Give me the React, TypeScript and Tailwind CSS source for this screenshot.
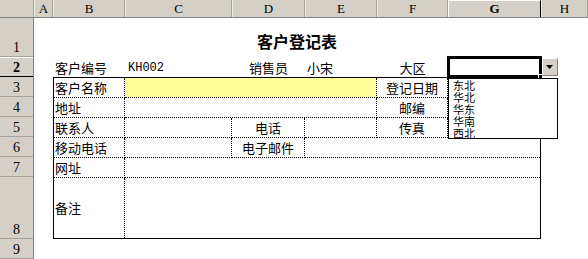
import React from "react";

const colHeads = [
  { l: "A", w: "w-[19px]" },
  { l: "B", w: "w-[72px]" },
  { l: "C", w: "w-[107px]" },
  { l: "D", w: "w-[73px]" },
  { l: "E", w: "w-[72px]" },
  { l: "F", w: "w-[71px]" },
  { l: "G", w: "w-[93px]", active: true },
  { l: "H", w: "flex-1" },
];

const rowHeads = [
  { n: "1", h: "h-[39px]" },
  { n: "2", h: "h-[20px]", active: true },
  { n: "3", h: "h-[20px]" },
  { n: "4", h: "h-[20px]" },
  { n: "5", h: "h-[20px]" },
  { n: "6", h: "h-[20px]" },
  { n: "7", h: "h-[20px]" },
  { n: "8", h: "h-[62px]" },
  { n: "9", h: "flex-1" },
];

const regions = ["东北", "华北", "华东", "华南", "西北"];

function Cell({
  children,
  className = "",
  middle = false,
}: {
  children?: React.ReactNode;
  className?: string;
  middle?: boolean;
}) {
  const align = middle ? "items-center" : "items-end pb-[1px]";
  return (
    <div className={`flex ${align} border-dotted border-black ${className}`}>
      {children}
    </div>
  );
}

export default function App() {
  return (
    <div className="w-[588px] h-[259px] overflow-hidden bg-white text-black font-['Noto_Sans_CJK_SC',sans-serif] text-[13px] leading-[16px] flex flex-col">
      {/* column headers */}
      <div className="flex h-[18px] bg-[#d4d0c8] border-b border-[#808080] font-['Liberation_Serif',serif] text-[13px]">
        <div className="w-[34px] border-r border-[#a5a29b]" />
        {colHeads.map((c) =>
          c.active ? (
            <div
              key={c.l}
              className={`${c.w} flex items-center justify-center border-t border-l border-t-white border-l-white border-r border-r-black font-bold`}
            >
              {c.l}
            </div>
          ) : (
            <div
              key={c.l}
              className={`${c.w} flex items-center justify-center border-r border-[#a5a29b] border-l border-l-[#efede8]`}
            >
              {c.l}
            </div>
          )
        )}
      </div>

      <div className="flex flex-1">
        {/* row headers */}
        <div className="w-[34px] flex flex-col bg-[#d4d0c8] border-r border-[#808080] font-['Liberation_Serif',serif] text-[14px] leading-[17px]">
          {rowHeads.map((r) =>
            r.active ? (
              <div
                key={r.n}
                className={`${r.h} flex items-end justify-center border-t border-t-white border-b border-b-black font-bold`}
              >
                {r.n}
              </div>
            ) : (
              <div
                key={r.n}
                className={`${r.h} flex items-end justify-center border-b border-[#a5a29b]`}
              >
                {r.n}
              </div>
            )
          )}
        </div>

        {/* sheet */}
        <div className="flex-1 grid grid-cols-[19px_72px_107px_73px_72px_71px_93px_1fr] grid-rows-[39px_20px_20px_20px_20px_20px_20px_62px_1fr]">
          <div className="col-start-2 col-span-6 row-start-1 flex items-center justify-center pt-[6px] font-bold text-[16px]">
            客户登记表
          </div>

          {/* row 2 */}
          <div className="col-start-2 row-start-2 flex items-end pl-[2px] pb-[1px]">客户编号</div>
          <div className="col-start-3 row-start-2 flex items-end pl-[3px] pb-[2px] font-['Liberation_Mono',monospace] text-[12px] leading-[14px]">
            KH002
          </div>
          <div className="col-start-4 row-start-2 flex items-end justify-center pb-[1px]">销售员</div>
          <div className="col-start-5 row-start-2 flex items-end pl-[2px] pb-[1px]">小宋</div>
          <div className="col-start-6 row-start-2 flex items-end justify-center pb-[1px]">大区</div>
          <div className="col-start-7 row-start-2 relative">
            <div className="absolute -left-[1px] -top-[1px] -right-[1px] -bottom-[1px] border-[3px] border-black" />
            <div className="absolute -right-[2px] -bottom-[2px] w-[5px] h-[5px] bg-black border border-white" />
            <div className="absolute left-full ml-[1px] top-[1px] w-[16px] h-[18px] bg-[#d4d0c8] border border-t-white border-l-white border-r-[#808080] border-b-[#808080] flex items-center justify-center">
              <svg width="8" height="4" viewBox="0 0 8 4">
                <path d="M0 0h7L3.5 4z" fill="#000" />
              </svg>
            </div>
            <div className="absolute top-full left-0 mt-[1px] w-[110px] h-[61px] bg-white border border-black z-10 pl-[4px] text-[11px] leading-[12px]">
              {regions.map((r) => (
                <div key={r} className="h-[12px]">
                  {r}
                </div>
              ))}
            </div>
          </div>

          {/* bordered table */}
          <div className="col-start-2 col-span-6 row-start-3 row-span-6 border border-black grid grid-cols-[71px_107px_73px_72px_71px_1fr] grid-rows-[20px_20px_20px_20px_20px_1fr]">
            {/* row 3 */}
            <Cell className="border-r border-b pl-[1px]">客户名称</Cell>
            <Cell className="col-span-3 border-r border-b bg-[#ffff99]" />
            <Cell className="border-r border-b justify-center">登记日期</Cell>
            <Cell className="border-b" />
            {/* row 4 */}
            <Cell className="border-r border-b pl-[1px]">地址</Cell>
            <Cell className="col-span-3 border-r border-b" />
            <Cell className="border-r border-b justify-center">邮编</Cell>
            <Cell className="border-b" />
            {/* row 5 */}
            <Cell className="border-r border-b pl-[1px]">联系人</Cell>
            <Cell className="border-r border-b" />
            <Cell className="border-r border-b justify-center">电话</Cell>
            <Cell className="border-r border-b" />
            <Cell className="border-r border-b justify-center">传真</Cell>
            <Cell className="border-b" />
            {/* row 6 */}
            <Cell className="border-r border-b pl-[1px]">移动电话</Cell>
            <Cell className="border-r border-b" />
            <Cell className="border-r border-b justify-center">电子邮件</Cell>
            <Cell className="col-span-3 border-b" />
            {/* row 7 */}
            <Cell className="border-r border-b pl-[1px]">网址</Cell>
            <Cell className="col-span-5 border-b" />
            {/* row 8 */}
            <Cell middle className="border-r pl-[1px]">
              备注
            </Cell>
            <Cell className="col-span-5" />
          </div>
        </div>
      </div>
    </div>
  );
}
